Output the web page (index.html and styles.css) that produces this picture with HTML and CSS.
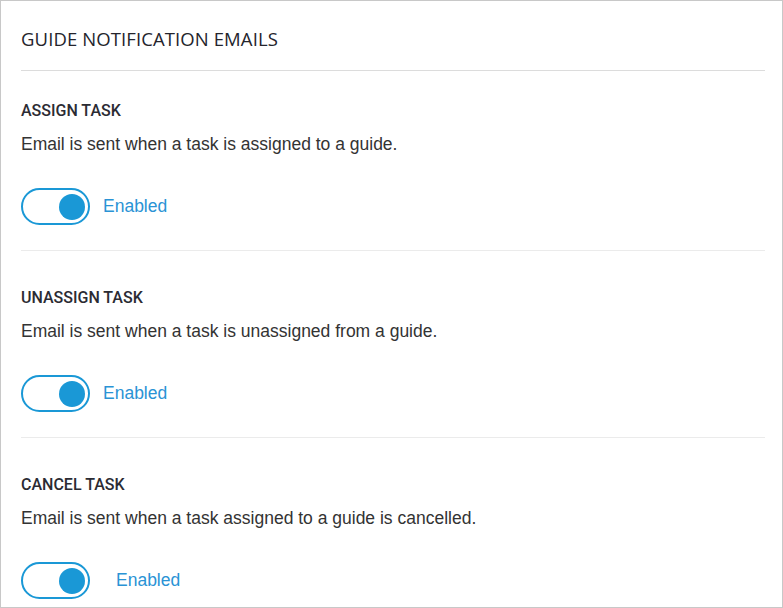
FILE: index.html
```html
<!DOCTYPE html>
<html>
<head>
<meta charset="utf-8">
<link rel="stylesheet" href="styles.css">
</head>
<body>
<div class="card">
  <div class="header">
    <h1 class="title">GUIDE NOTIFICATION EMAILS</h1>
  </div>
  <div class="section">
    <h2 class="heading">ASSIGN TASK</h2>
    <p class="desc">Email is sent when a task is assigned to a guide.</p>
    <div class="row">
      <span class="toggle"><span class="knob"></span></span>
      <span class="label">Enabled</span>
    </div>
  </div>
  <div class="section">
    <h2 class="heading">UNASSIGN TASK</h2>
    <p class="desc">Email is sent when a task is unassigned from a guide.</p>
    <div class="row">
      <span class="toggle"><span class="knob"></span></span>
      <span class="label">Enabled</span>
    </div>
  </div>
  <div class="section last">
    <h2 class="heading">CANCEL TASK</h2>
    <p class="desc">Email is sent when a task assigned to a guide is cancelled.</p>
    <div class="row">
      <span class="toggle"><span class="knob"></span></span>
      <span class="label wide">Enabled</span>
    </div>
  </div>
</div>
</body>
</html>
```
FILE: styles.css
```css
html, body {
  margin: 0;
  padding: 0;
  background: #fff;
}
.card {
  box-sizing: border-box;
  width: 783px;
  height: 608px;
  border: 1px solid #c8c8c8;
  padding: 0 17px 0 20px;
  overflow: hidden;
}
.header {
  height: 69px;
  border-bottom: 1px solid #dcdcdc;
  box-sizing: content-box;
}
.title {
  margin: 0;
  padding-top: 25px;
  font-family: "Open Sans", "Lato", sans-serif;
  font-weight: 500;
  font-size: 18.5px;
  line-height: 26px;
  color: #24242c;
  letter-spacing: 0.1px;
}
.section {
  padding: 37px 0 25px;
  border-bottom: 1px solid #ebebeb;
}
.header + .section {
  padding-top: 30px;
}
.section.last {
  border-bottom: none;
}
.heading {
  margin: 0;
  font-family: "Roboto", sans-serif;
  font-weight: 500;
  font-size: 16px;
  line-height: 20px;
  color: #2b2b33;
}
.desc {
  margin: 12px 0 0;
  font-family: "Liberation Sans", Arial, sans-serif;
  font-size: 17.5px;
  line-height: 22px;
  color: #333;
}
.row {
  margin-top: 33px;
  display: flex;
  align-items: center;
}
.toggle {
  box-sizing: border-box;
  width: 69px;
  height: 37px;
  border: 2px solid #1a98d6;
  border-radius: 19px;
  display: flex;
  align-items: center;
  justify-content: flex-end;
  padding-right: 3px;
}
.knob {
  width: 26px;
  height: 26px;
  border-radius: 50%;
  background: #1a98d6;
}
.label {
  margin-left: 13px;
  font-family: "Liberation Sans", Arial, sans-serif;
  font-size: 17.5px;
  color: #2a93d5;
}
.label.wide {
  margin-left: 26px;
}
```
